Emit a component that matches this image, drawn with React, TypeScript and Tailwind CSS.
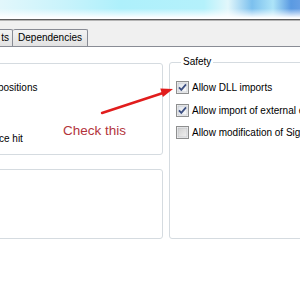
import React from "react";

function Check({ checked }: { checked: boolean }) {
  return (
    <svg width="13" height="13" viewBox="0 0 13 13" className="shrink-0">
      <defs>
        <linearGradient id={checked ? "cbg1" : "cbg2"} x1="0" y1="0" x2="1" y2="1">
          <stop offset="0" stopColor={checked ? "#dfe3ea" : "#cfcfcf"} />
          <stop offset="1" stopColor={checked ? "#fbfbfb" : "#f2f2f2"} />
        </linearGradient>
      </defs>
      <rect x="0.5" y="0.5" width="12" height="12" fill="#f4f4f4" stroke="#8e8f8f" />
      <rect x="2" y="2" width="9" height="9" fill={`url(#${checked ? "cbg1" : "cbg2"})`} stroke="#b9bcc2" strokeWidth="0.6" />
      {checked && (
        <path d="M3 6.3 L5.3 8.8 L10 3.4" fill="none" stroke="#3c4f82" strokeWidth="1.8" strokeLinejoin="miter" />
      )}
    </svg>
  );
}

export default function App() {
  return (
    <div
      className="relative w-[300px] h-[300px] overflow-hidden bg-white flex flex-col text-[10px] text-black"
      style={{ fontFamily: '"Liberation Sans", Arial, sans-serif' }}
    >
      <div className="h-[19px] shrink-0 bg-[linear-gradient(to_bottom,rgba(255,255,255,0)_45%,#ffffff_95%),linear-gradient(to_right,#e2f7fb_0%,#c8f3fb_22%,#aef0fb_40%,#b4f1fb_68%,#e2f7fb_76%,#7cc0ee_84%,#ade4f8_91%,#5a9ae2_97%,#669fe4_100%)]" />
      <div className="h-[1px] shrink-0 bg-[#5d5d5d]" />
      <div className="h-[1px] shrink-0 bg-[#b5b5b5]" />
      <div className="h-[25px] shrink-0 bg-[#f0f0f0] flex items-end">
        <div className="ml-[-30px] w-[43px] h-[17px] border border-b-0 border-[#898c95] rounded-t-[2px] bg-[linear-gradient(to_bottom,#f3f3f3,#e2e2e2)] flex items-center justify-end pr-[3px] leading-[12px]">
          ts
        </div>
        <div className="w-[75px] h-[17px] border border-b-0 border-l-0 border-[#898c95] rounded-t-[2px] bg-[linear-gradient(to_bottom,#f3f3f3,#e2e2e2)] flex items-center justify-center leading-[12px]">
          Dependencies
        </div>
      </div>
      <div className="flex-1 border-t border-[#898c95] bg-white pt-[16px] flex items-start">
        <div className="ml-[-20px] w-[183px] shrink-0 flex flex-col">
          <div className="h-[92px] border border-[#d5dbe0] rounded-[3px] flex flex-col pt-[18px] leading-[12px]">
            <div className="pl-[17px]">positions</div>
            <div className="pl-[18px] mt-[39px]">ce hit</div>
          </div>
          <div className="h-[70px] mt-[14px] border border-[#d5dbe0] rounded-[3px]" />
        </div>
        <fieldset className="ml-[6px] mt-[-7px] w-[200px] h-[183px] shrink-0 border border-[#d5dbe0] rounded-[3px] pl-[6px] pt-[13px]">
          <legend className="ml-[5px] px-[2px] leading-[12px]">Safety</legend>
          <div className="flex flex-col leading-[12px]">
            <div className="flex items-center gap-[3px] h-[13px] whitespace-nowrap">
              <Check checked={true} />
              <span>Allow DLL imports</span>
            </div>
            <div className="flex items-center gap-[3px] h-[13px] mt-[10px] whitespace-nowrap">
              <Check checked={true} />
              <span>Allow import of external executables</span>
            </div>
            <div className="flex items-center gap-[3px] h-[13px] mt-[9px] whitespace-nowrap">
              <Check checked={false} />
              <span>Allow modification of Signature</span>
            </div>
          </div>
        </fieldset>
      </div>

      <svg className="absolute left-0 top-0 pointer-events-none" width="300" height="300" viewBox="0 0 300 300">
        <line x1="102" y1="113" x2="163" y2="93" stroke="#e11d1d" strokeWidth="2.4" strokeLinecap="round" />
        <polygon points="173,89 162.9,97 160.3,88.6" fill="#e11d1d" />
      </svg>
      <div className="absolute left-[63px] top-[123px] text-[13.5px] leading-[16px] text-[#b3343c] whitespace-nowrap">
        Check this
      </div>
    </div>
  );
}
